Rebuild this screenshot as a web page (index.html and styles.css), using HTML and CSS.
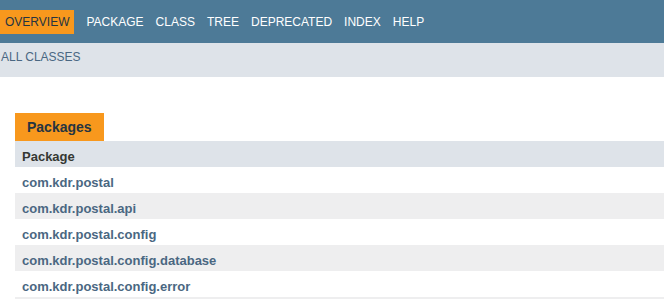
FILE: index.html
```html
<!DOCTYPE html>
<html lang="en">
<head>
<meta charset="UTF-8">
<title>Overview</title>
<link rel="stylesheet" href="styles.css">
</head>
<body>
    <div class="top-nav">
        <ul class="nav-list">
            <li class="nav-active">Overview</li>
            <li><a href="#">Package</a></li>
            <li><a href="#">Class</a></li>
            <li><a href="#">Tree</a></li>
            <li><a href="#">Deprecated</a></li>
            <li><a href="#">Index</a></li>
            <li><a href="#">Help</a></li>
        </ul>
    </div>
    <div class="sub-nav">
        <a href="#">All Classes</a>
    </div>

    <div class="content">
        <div class="caption"><span>Packages</span></div>
        <table class="overview-summary">
            <tr class="head-row"><th>Package</th></tr>
            <tr><td><a href="#">com.kdr.postal</a></td></tr>
            <tr class="alt"><td><a href="#">com.kdr.postal.api</a></td></tr>
            <tr><td><a href="#">com.kdr.postal.config</a></td></tr>
            <tr class="alt"><td><a href="#">com.kdr.postal.config.database</a></td></tr>
            <tr><td><a href="#">com.kdr.postal.config.error</a></td></tr>
            <tr class="alt"><td></td></tr>
        </table>
    </div>
</body>
</html>
```

FILE: styles.css
```css
body {
    font-family: "Liberation Sans", Arial, sans-serif;
    font-size: 13px;
    margin: 0;
    padding: 0;
    background-color: #fff;
    color: #353833;
}

a {
    text-decoration: none;
}

.top-nav {
    background-color: #4d7a97;
    height: 43px;
    display: flex;
    align-items: center;
}

.nav-list {
    list-style: none;
    margin: 0;
    padding: 0;
    display: flex;
    font-size: 12px;
    text-transform: uppercase;
}

.nav-list li {
    padding: 0 6px;
    height: 24px;
    line-height: 24px;
}

.nav-list li a {
    color: #fff;
}

.nav-list .nav-active {
    background-color: #f8981d;
    color: #253441;
    padding: 0 5px;
    margin-right: 6px;
}

.sub-nav {
    background-color: #dee3e9;
    height: 34px;
    padding: 5px 0 0 1px;
    box-sizing: border-box;
    font-size: 12px;
    text-transform: uppercase;
}

.sub-nav a {
    color: #4a6782;
    line-height: 18px;
}

.content {
    padding: 36px 0 0 15px;
}

.caption span {
    display: inline-block;
    background-color: #f8981d;
    color: #253441;
    font-size: 14px;
    font-weight: bold;
    height: 28px;
    line-height: 28px;
    padding: 0 12px;
}

.overview-summary {
    width: 100%;
    border-collapse: collapse;
}

.overview-summary th,
.overview-summary td {
    text-align: left;
    height: 22px;
    padding: 4px 7px 0;
    font-weight: bold;
}

.head-row {
    background-color: #dee3e9;
}

.overview-summary td a {
    color: #4a6782;
}

.overview-summary .alt {
    background-color: #eeeeef;
}
```
